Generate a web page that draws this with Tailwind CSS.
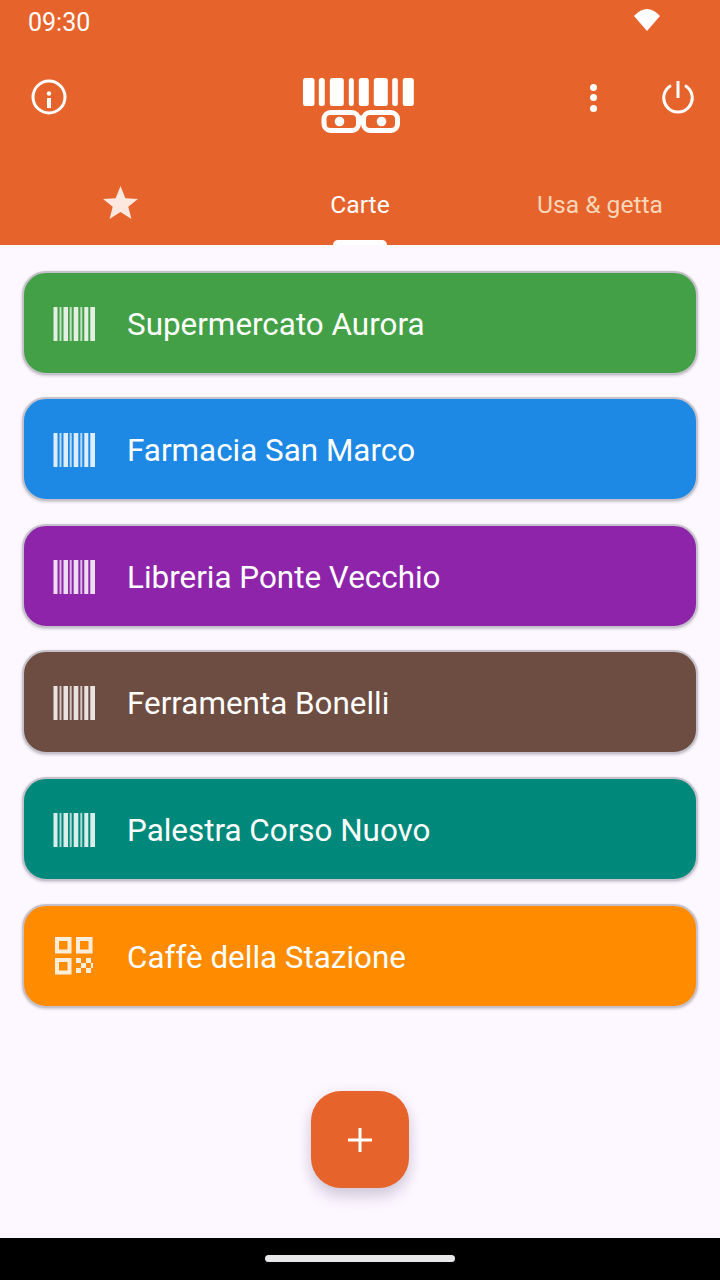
<!DOCTYPE html>
<html lang="en">
<head>
  <meta charset="UTF-8" />
  <meta name="viewport" content="width=device-width, initial-scale=1.0" />
  <title>Carte</title>
  <script src="https://cdn.jsdelivr.net/npm/@tailwindcss/browser@4"></script>
</head>
<body class="bg-[#fdf7ff] font-['Roboto',sans-serif]">
<svg class="hidden">
  <symbol id="barcode" viewBox="0 0 42 34">
    <path fill="#fff" d="M0.5 0h4v34h-4zM10.5 0h4.5v34h-4.5zM20.7 0h4.6v34h-4.6zM31.3 0h4v34h-4zM37.3 0h4.7v34h-4.7z" />
    <path fill="#fff" fill-opacity="0.8" d="M6.5 0h2v34h-2zM16.7 0h2v34h-2zM27.3 0h2v34h-2z" />
  </symbol>
</svg>

<div class="w-[720px] h-[1280px] flex flex-col overflow-hidden">

  <!-- Header -->
  <header class="bg-[#e6632b] h-[245px] shrink-0 flex flex-col text-white">
    <!-- Status bar -->
    <div class="h-[44px] pl-[28px] pr-[60px] flex justify-between items-start">
      <span class="text-[25px] leading-[45px]">09:30</span>
      <svg class="mt-[9px]" width="26" height="22" viewBox="0 0 26 22"><path fill="#fff" d="M0 7 Q13 -7 26 7 L13 22 Z" /></svg>
    </div>

    <!-- Toolbar -->
    <div class="h-[107px] relative flex items-center pl-[31px] pr-[26px]">
      <svg width="36" height="36" viewBox="0 0 36 36" class="mt-[-1px]">
        <circle cx="18" cy="18" r="16" fill="none" stroke="#fff" stroke-width="3" />
        <circle cx="18" cy="14.5" r="2.2" fill="#fff" />
        <rect x="16" y="19" width="4" height="10" fill="#fff" />
      </svg>
      <div class="flex-1 flex justify-center pl-[60px]">
        <svg width="112" height="58" viewBox="0 0 112 58" class="mt-[19px]">
          <g fill="#fff">
            <rect x="0" y="0" width="11.5" height="28" rx="2.5" />
            <rect x="15.8" y="0" width="6" height="28" rx="2.5" />
            <rect x="26.8" y="0" width="14" height="28" rx="2.5" />
            <rect x="45.8" y="0" width="5" height="28" rx="2.5" />
            <rect x="55.8" y="0" width="10" height="28" rx="2.5" />
            <rect x="70.8" y="0" width="14" height="28" rx="2.5" />
            <rect x="89.2" y="0" width="5.6" height="28" rx="2.5" />
            <rect x="99.8" y="0" width="11" height="28" rx="2.5" />
            <circle cx="36.5" cy="43.5" r="4.8" />
            <circle cx="78.5" cy="43.5" r="4.8" />
          </g>
          <g fill="none" stroke="#fff" stroke-width="5">
            <rect x="21" y="34.5" width="34.5" height="18" rx="6.5" />
            <rect x="60.5" y="34.5" width="34" height="18" rx="6.5" />
            <path d="M55.5 40h5" />
          </g>
        </svg>
      </div>
      <div class="w-[7px] h-[28px] flex flex-col justify-between mr-[65px]">
        <span class="block w-[7px] h-[7px] rounded-full bg-white"></span>
        <span class="block w-[7px] h-[7px] rounded-full bg-white"></span>
        <span class="block w-[7px] h-[7px] rounded-full bg-white"></span>
      </div>
      <svg width="32" height="33" viewBox="0 0 32 33" fill="none" stroke="#fff" stroke-width="3" class="mt-[-1px]">
        <path d="M16 0v17" />
        <path stroke-width="3" d="M9 4.5 A14.2 14.2 0 1 0 23 4.5" />
      </svg>
    </div>

    <!-- Tabs -->
    <nav class="flex-1 grid grid-cols-3">
      <div class="relative flex items-start justify-center pt-[35px]">
        <svg width="35" height="33" viewBox="0 0 36 34"><path fill="#fff" fill-opacity="0.85" d="M18 0 L23 12.7 L36 13.3 L26 21.3 L29.3 34 L18 26.7 L6.7 34 L10 21.3 L0 13.3 L13 12.7 Z" /></svg>
      </div>
      <div class="relative flex justify-center text-[24.6px] leading-[28px] pt-[40px]">
        Carte
        <span class="absolute bottom-0 left-[93px] w-[54px] h-[5px] bg-white rounded-t-[5px]"></span>
      </div>
      <div class="flex justify-center text-[24.6px] leading-[28px] pt-[40px] text-[#f9d6b8]">Usa &amp; getta</div>
    </nav>
  </header>

  <!-- Cards -->
  <main class="flex-1 flex flex-col px-[22px] pt-[25.7px] items-stretch">
    <div class="flex flex-col gap-[22.6px]">
      <div class="h-[104px] rounded-[24px] border-2 border-[#c6c2cb] bg-[#43a047] shadow-[0_1px_3px_rgba(0,0,0,0.2)] flex items-center pl-[29px] gap-[32px] text-white text-[31.4px]">
        <svg class="w-[42px] h-[34px] opacity-85 mt-[2px]"><use href="#barcode" /></svg>
        <span class="mt-[3px]">Supermercato Aurora</span>
      </div>
      <div class="h-[104px] rounded-[24px] border-2 border-[#c6c2cb] bg-[#1e88e5] shadow-[0_1px_3px_rgba(0,0,0,0.2)] flex items-center pl-[29px] gap-[32px] text-white text-[31.4px]">
        <svg class="w-[42px] h-[34px] opacity-85 mt-[2px]"><use href="#barcode" /></svg>
        <span class="mt-[3px]">Farmacia San Marco</span>
      </div>
      <div class="h-[104px] rounded-[24px] border-2 border-[#c6c2cb] bg-[#8e24aa] shadow-[0_1px_3px_rgba(0,0,0,0.2)] flex items-center pl-[29px] gap-[32px] text-white text-[31.4px]">
        <svg class="w-[42px] h-[34px] opacity-85 mt-[2px]"><use href="#barcode" /></svg>
        <span class="mt-[3px]">Libreria Ponte Vecchio</span>
      </div>
      <div class="h-[104px] rounded-[24px] border-2 border-[#c6c2cb] bg-[#6d4c41] shadow-[0_1px_3px_rgba(0,0,0,0.2)] flex items-center pl-[29px] gap-[32px] text-white text-[31.4px]">
        <svg class="w-[42px] h-[34px] opacity-85 mt-[2px]"><use href="#barcode" /></svg>
        <span class="mt-[3px]">Ferramenta Bonelli</span>
      </div>
      <div class="h-[104px] rounded-[24px] border-2 border-[#c6c2cb] bg-[#00897b] shadow-[0_1px_3px_rgba(0,0,0,0.2)] flex items-center pl-[29px] gap-[32px] text-white text-[31.4px]">
        <svg class="w-[42px] h-[34px] opacity-85 mt-[2px]"><use href="#barcode" /></svg>
        <span class="mt-[3px]">Palestra Corso Nuovo</span>
      </div>
      <div class="h-[104px] rounded-[24px] border-2 border-[#c6c2cb] bg-[#ff8c00] shadow-[0_1px_3px_rgba(0,0,0,0.2)] flex items-center pl-[29px] gap-[32px] text-white text-[31.4px]">
        <svg class="w-[42px] h-[38px] opacity-85" viewBox="0 0 42 38">
          <g fill="none" stroke="#fff" stroke-width="4">
            <rect x="4" y="2" width="12.5" height="12.5" />
            <rect x="25" y="2" width="12.5" height="12.5" />
            <rect x="4" y="23" width="12.5" height="12.5" />
          </g>
          <path fill="#fff" d="M23 21h5v5h-5zM33 21h5v5h-5zM28 26h5v5h-5zM23 31h5v5h-5zM33 31h5v5h-5zM38 26h2v5h-2z" />
        </svg>
        <span class="mt-[3px]">Caffè della Stazione</span>
      </div>
    </div>

    <!-- Add button -->
    <button class="mt-auto mb-[50px] self-center w-[98px] h-[97px] rounded-[30px] bg-[#e6632b] shadow-[0_10px_14px_rgba(60,40,90,0.14),0_3px_14px_rgba(60,40,90,0.12)] flex items-center justify-center">
      <svg width="26" height="26" viewBox="0 0 26 26"><path stroke="#fff" stroke-width="3" d="M13 1v24M1 13h24" /></svg>
    </button>
  </main>

  <!-- Navigation bar -->
  <div class="h-[42px] shrink-0 bg-black flex justify-center pt-[17px]">
    <span class="block w-[190px] h-[7px] rounded-full bg-[#e8e8ea]"></span>
  </div>
</div>
</body>
</html>
